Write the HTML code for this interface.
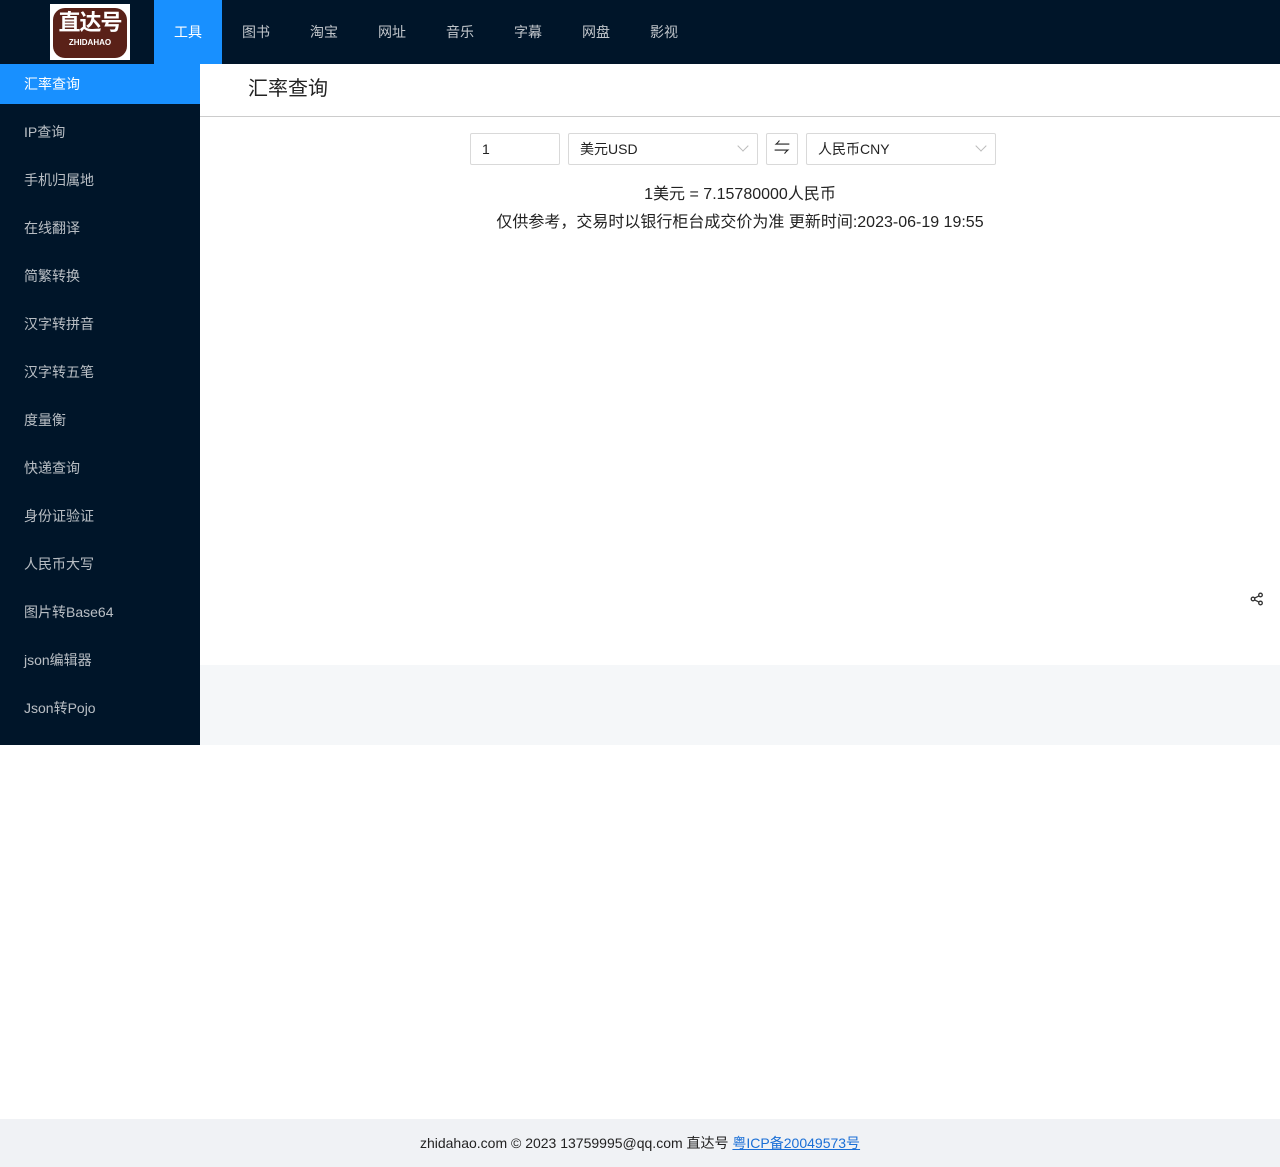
<!DOCTYPE html>
<html><head><meta charset="utf-8"><style>
*{margin:0;padding:0;box-sizing:border-box}
body{width:1280px;height:1167px;position:relative;font-family:"Liberation Sans","Noto Sans CJK SC",sans-serif;background:#fff;overflow:hidden}
.top{position:absolute;left:0;top:0;width:1280px;height:64px;background:#001529}
.logo{position:absolute;left:50px;top:4px;width:80px;height:56px;background:#fff}
.logo .b{position:absolute;left:3px;top:4px;width:74px;height:50px;background:#5a2118;border-radius:12px;color:#fff;text-align:center}
.logo .b span{display:block;font-size:22px;line-height:30px;font-weight:bold;letter-spacing:-1px}
.logo .b i{display:block;font-style:normal;font-size:8px;line-height:10px;font-weight:bold}
.nav{position:absolute;left:154px;top:0;height:64px;display:flex}
.nav div{width:68px;height:64px;line-height:64px;text-align:center;color:rgba(255,255,255,.75);font-size:14px}
.nav div.on{background:#1890ff;color:#fff}
.side{position:absolute;left:0;top:64px;width:200px;height:681px;background:#001529}
.side div{height:40px;line-height:40px;padding-left:24px;margin-bottom:8px;color:rgba(255,255,255,.72);font-size:14px}
.side div.on{background:#1890ff;color:#fff}
.head{position:absolute;left:200px;top:64px;width:1080px;height:53px;border-bottom:1px solid #ccc}
.head span{position:absolute;left:48px;top:8px;font-size:20px;color:#222}
.gray{position:absolute;left:200px;top:665px;width:1080px;height:80px;background:#f5f7f9}
.box{position:absolute;top:133px;height:32px;border:1px solid #d9d9d9;border-radius:2px;font-size:14px;line-height:30px;padding-left:11px;color:#222}
.box .ar{position:absolute;right:10px;top:8px;width:8px;height:8px;border-right:1px solid #bbb;border-bottom:1px solid #bbb;transform:rotate(45deg)}
.txt{position:absolute;left:200px;width:1080px;text-align:center;font-size:16px;color:#222}
.foot{position:absolute;left:0;top:1119px;width:1280px;height:48px;background:#f0f2f5;text-align:center;line-height:48px;font-size:14px;color:#222}
.foot a{color:#1a6fd6;text-decoration:underline}
</style></head><body>
<div class="top">
<div class="logo"><div class="b"><span>直达号</span><i>ZHIDAHAO</i></div></div>
<div class="nav"><div class="on">工具</div><div>图书</div><div>淘宝</div><div>网址</div><div>音乐</div><div>字幕</div><div>网盘</div><div>影视</div></div>
</div>
<div class="side">
<div class="on">汇率查询</div><div>IP查询</div><div>手机归属地</div><div>在线翻译</div><div>简繁转换</div><div>汉字转拼音</div><div>汉字转五笔</div><div>度量衡</div><div>快递查询</div><div>身份证验证</div><div>人民币大写</div><div>图片转Base64</div><div>json编辑器</div><div>Json转Pojo</div>
</div>
<div class="head"><span>汇率查询</span></div>
<div class="box" style="left:470px;width:90px">1</div>
<div class="box" style="left:568px;width:190px">美元USD<span class="ar"></span></div>
<div class="box" style="left:766px;width:32px;padding:0;text-align:center;font-size:16px">⇋</div>
<div class="box" style="left:806px;width:190px">人民币CNY<span class="ar"></span></div>
<div class="txt" style="top:180px">1美元 = 7.15780000人民币</div>
<div class="txt" style="top:208px">仅供参考，交易时以银行柜台成交价为准 更新时间:2023-06-19 19:55</div>
<svg style="position:absolute;left:1250px;top:592px" width="14" height="14" viewBox="0 0 14 14" fill="none" stroke="#333" stroke-width="1.3"><circle cx="10.5" cy="3" r="1.8"/><circle cx="3" cy="7" r="1.8"/><circle cx="10.5" cy="11" r="1.8"/><path d="M4.6 6.1 9 3.9M4.6 7.9 9 10.1"/></svg>
<div class="gray"></div>
<div class="foot">zhidahao.com © 2023 13759995@qq.com 直达号 <a>粤ICP备20049573号</a></div>
</body></html>
